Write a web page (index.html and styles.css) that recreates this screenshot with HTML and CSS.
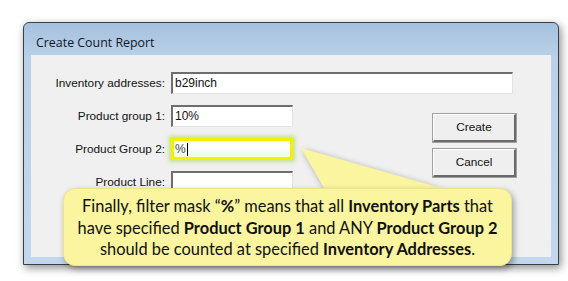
FILE: index.html
```html
<!DOCTYPE html>
<html>
<head>
<meta charset="utf-8">
<link rel="stylesheet" href="styles.css">
</head>
<body>
<div class="stage">
  <div class="window">
    <div class="titlebar">Create Count Report</div>
    <div class="client">
      <div class="label r1">Inventory addresses:</div>
      <div class="field wide r1">b29inch</div>
      <div class="label r2">Product group 1:</div>
      <div class="field r2">10%</div>
      <div class="label r3">Product Group 2:</div>
      <div class="field hl r3"><span class="val">%</span><span class="caret"></span></div>
      <div class="label r4">Product Line:</div>
      <div class="field r4"></div>
      <div class="buttons">
        <div class="btn">Create</div>
        <div class="btn">Cancel</div>
      </div>
    </div>
  </div>
  <svg class="pointer" width="160" height="50" viewBox="0 0 160 50">
    <polygon points="8,2 31,42 148,42" fill="#fbf5a0" />
  </svg>
  <div class="callout">
    <p>Finally, filter mask “<b>%</b>” means that all <b>Inventory Parts</b> that</p>
    <p>have specified <b>Product Group 1</b> and ANY <b>Product Group 2</b></p>
    <p>should be counted at specified <b>Inventory Addresses</b>.</p>
  </div>
</div>
</body>
</html>
```
FILE: styles.css
```css
html, body {
  margin: 0;
  padding: 0;
  background: #ffffff;
}
.stage {
  position: relative;
  width: 568px;
  height: 281px;
  overflow: hidden;
}
.window {
  margin: 22px 0 0 23px;
  width: 520px;
  height: 234px;
  border: 1px solid #3a3f47;
  border-radius: 6px 6px 0 0;
  background: linear-gradient(180deg, #a6c1de 0px, #b9d0e8 34px, #c3d8ee 100%);
  box-shadow: 2px 3px 8px rgba(0, 0, 0, 0.45);
  display: flex;
  flex-direction: column;
  padding: 0 7px 7px 7px;
  box-sizing: content-box;
}
.titlebar {
  height: 32px;
  font-family: "Open Sans", "Noto Sans", sans-serif;
  font-size: 12.4px;
  color: #101828;
  line-height: 40px;
  padding-left: 5px;
  white-space: nowrap;
}
.client {
  flex: 1;
  background: #f0f0f0;
  display: grid;
  grid-template-columns: 134px 122px 128px 83px;
  grid-template-rows: 22px 22px 22px 22px;
  column-gap: 6px;
  row-gap: 11px;
  padding-top: 17px;
  align-content: start;
  font-family: "Liberation Sans", Arial, sans-serif;
  font-size: 11.8px;
  color: #111;
}
.label {
  grid-column: 1;
  text-align: right;
  line-height: 22px;
  white-space: nowrap;
}
.r1 { grid-row: 1; }
.r2 { grid-row: 2; }
.r3 { grid-row: 3; }
.r4 { grid-row: 4; }
.field {
  grid-column: 2;
  background: #fff;
  border-top: 2px solid #6e6e6e;
  border-left: 2px solid #6e6e6e;
  border-bottom: 1px solid #e3e3e3;
  border-right: 1px solid #e3e3e3;
  line-height: 19px;
  padding-left: 2px;
  box-sizing: border-box;
  white-space: nowrap;
  overflow: hidden;
  font-size: 12px;
}
.field.wide {
  grid-column: 2 / 5;
  margin-right: 3px;
}
.field.hl {
  border: 3px solid #f2f200;
  background: linear-gradient(180deg, #fafff0 0%, #ffffff 40%, #f2fbe2 100%);
  box-shadow: 0 0 4px 2px rgba(180, 220, 110, 0.75);
  line-height: 16px;
  padding-left: 1px;
  color: #444;
  display: flex;
  align-items: center;
}
.caret {
  display: inline-block;
  width: 1px;
  height: 13px;
  background: #000;
  margin-left: 1px;
}
.buttons {
  grid-column: 4;
  grid-row: 2 / 5;
  margin-top: 9px;
  display: flex;
  flex-direction: column;
  gap: 7px;
}
.btn {
  height: 28px;
  box-sizing: border-box;
  background: #efefef;
  border-top: 1px solid #ffffff;
  border-left: 1px solid #ffffff;
  border-right: 2px solid #6a6a6a;
  border-bottom: 2px solid #6a6a6a;
  outline: 1px solid #a0a0a0;
  text-align: center;
  line-height: 25px;
  color: #111;
}
.pointer {
  position: absolute;
  left: 293px;
  top: 146px;
  filter: drop-shadow(2px 2px 3px rgba(0, 0, 0, 0.35));
}
.callout {
  position: absolute;
  left: 63px;
  top: 188px;
  width: 449px;
  height: 78px;
  box-sizing: border-box;
  border-radius: 12px;
  background: #fbf5a0;
  border: 1px solid #ece48a;
  box-shadow: 2px 3px 6px rgba(0, 0, 0, 0.35);
  padding-top: 6px;
  font-family: "Lato", "Open Sans", sans-serif;
  font-size: 16.4px;
  color: #111;
  text-align: center;
}
.callout p {
  margin: 0;
  line-height: 21.5px;
  white-space: nowrap;
}
.callout b {
  font-weight: 700;
}
```
